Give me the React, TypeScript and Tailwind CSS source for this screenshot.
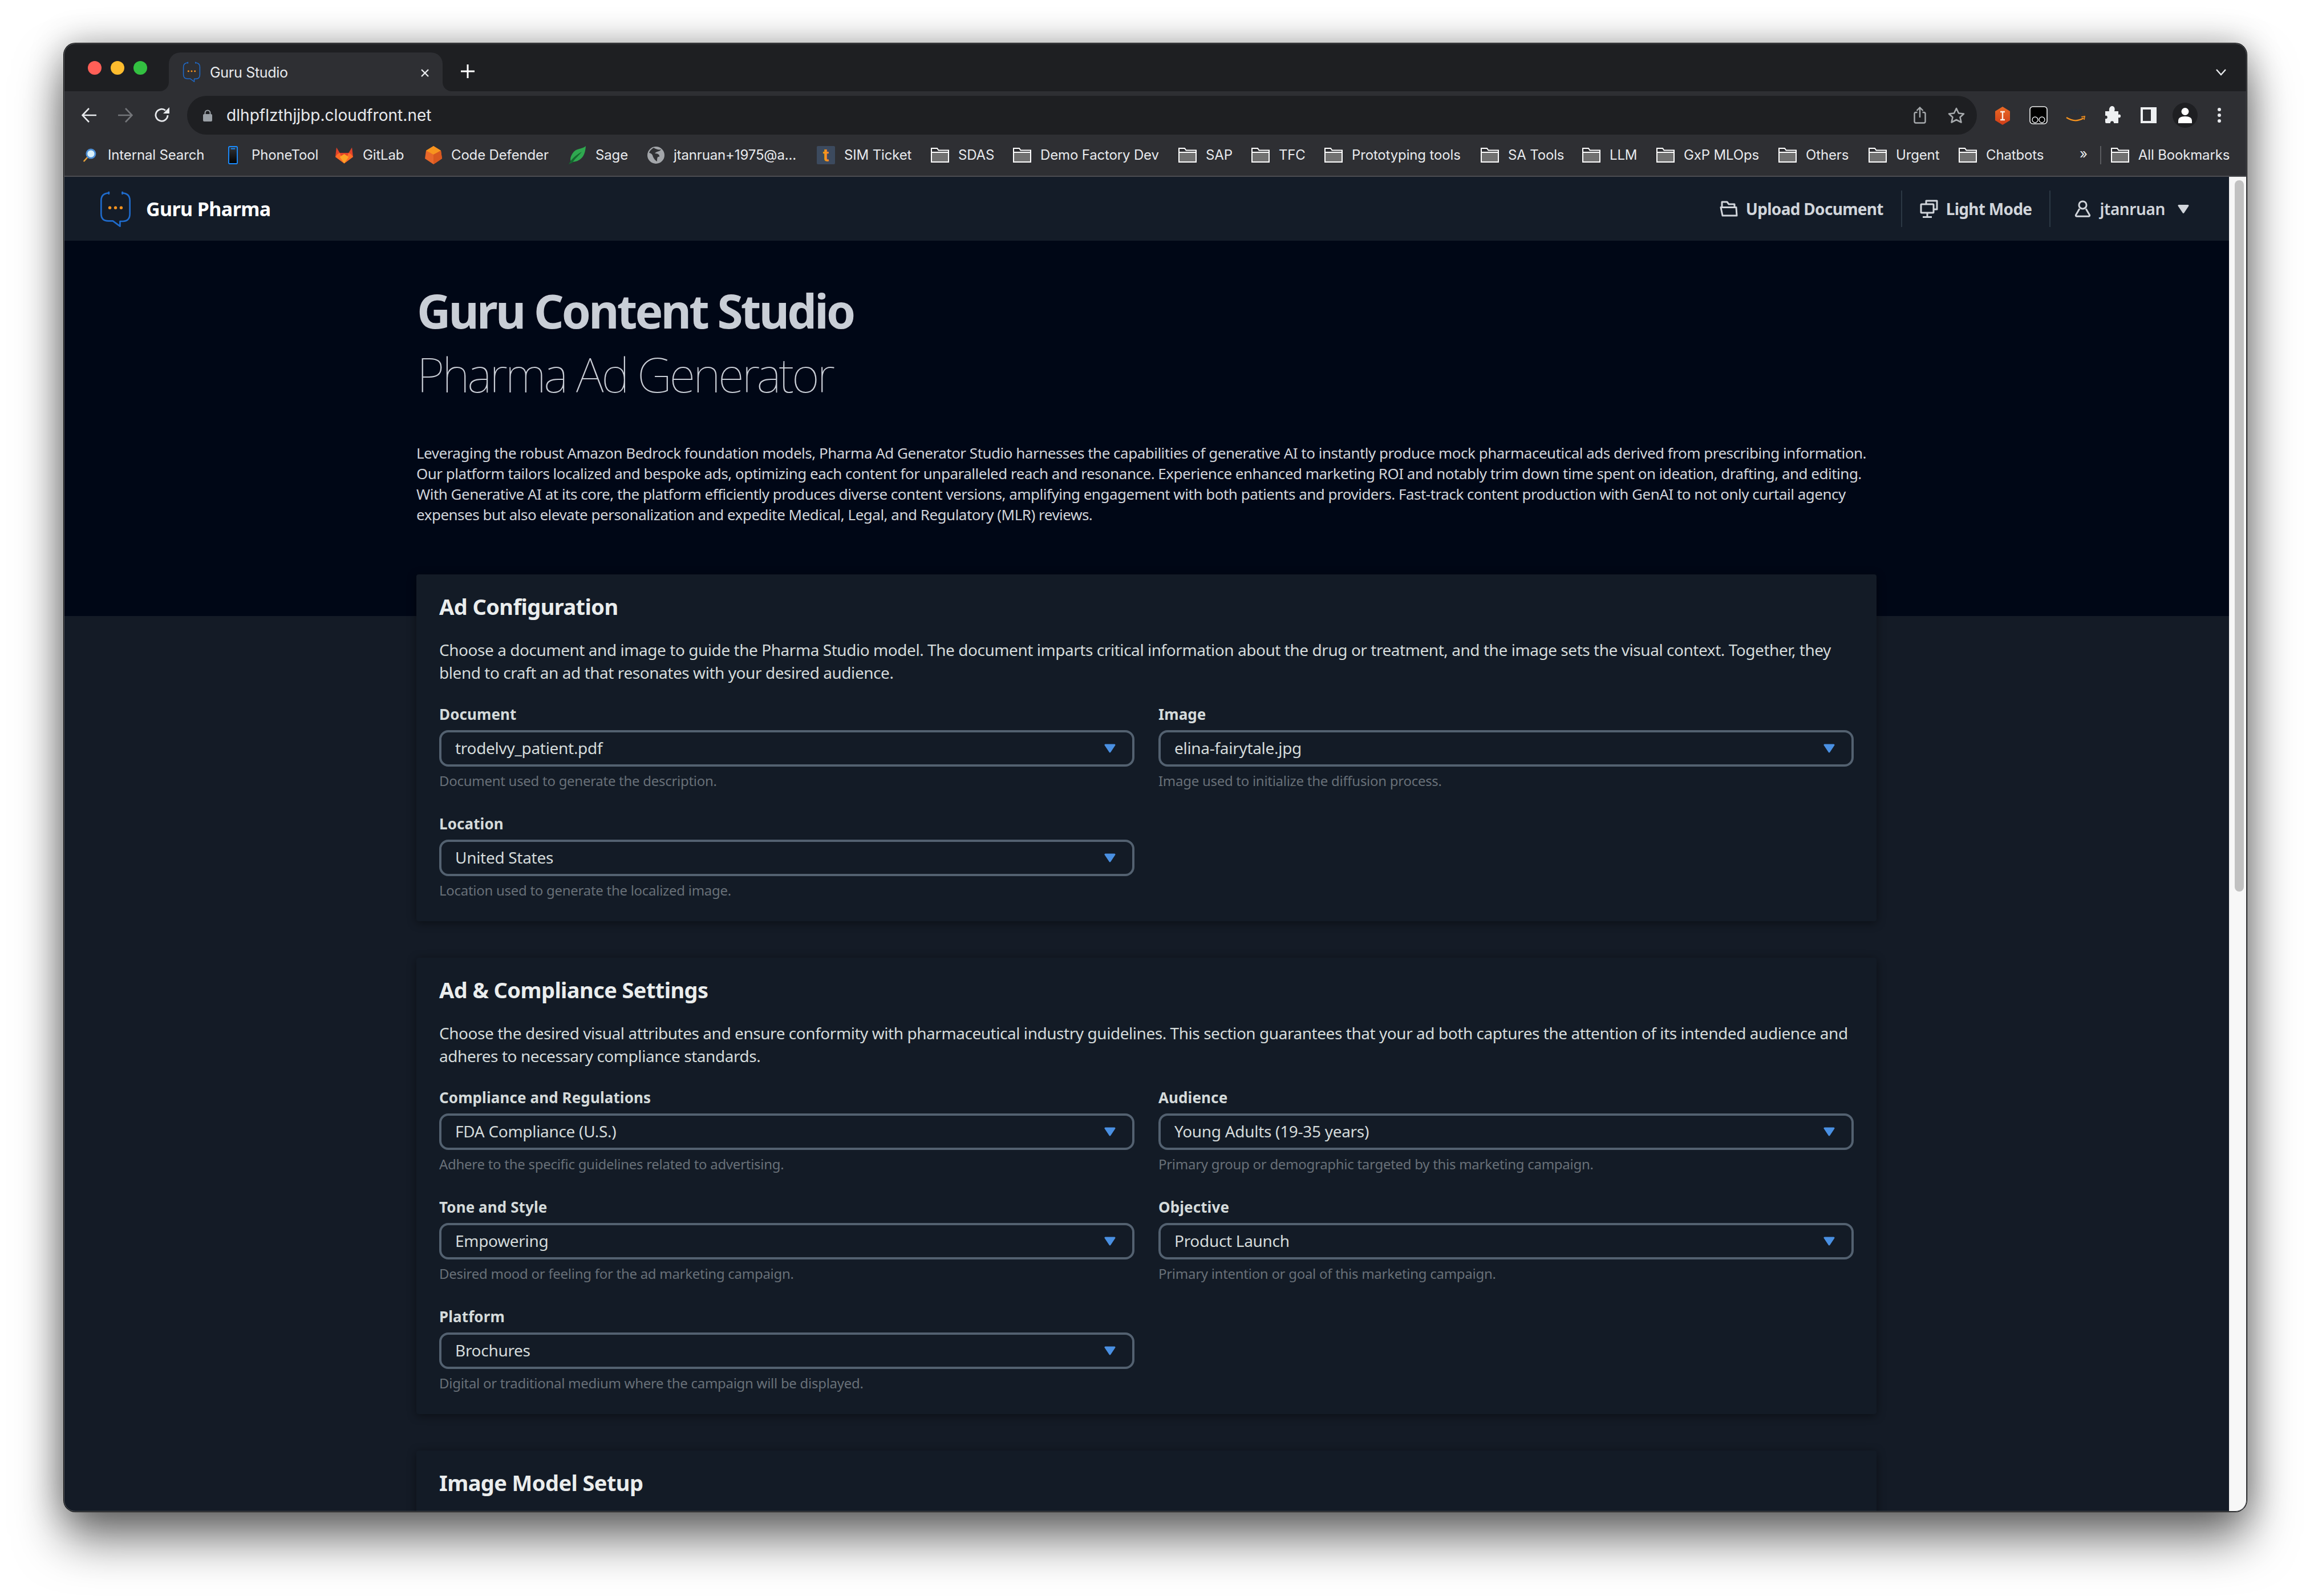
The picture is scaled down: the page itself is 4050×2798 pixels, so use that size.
import React from "react";

const Logo = ({ className }: { className: string }) => (
  <svg viewBox="0 0 160 190" className={className} fill="none">
    <path d="M44 10 Q4 12 4 50 L4 120 Q4 158 42 158 L66 158 L104 186 L104 160 L120 160 Q156 158 156 120 L156 50 Q156 12 116 10" stroke="#1f6bcb" strokeWidth="8" strokeLinejoin="round" />
    <rect x="40" y="2" width="9" height="16" rx="3" fill="#1f6bcb" />
    <rect x="112" y="2" width="9" height="16" rx="3" fill="#1f6bcb" />
    <circle cx="50" cy="88" r="8" fill="#f7931e" />
    <circle cx="80" cy="88" r="8" fill="#f7931e" />
    <circle cx="110" cy="88" r="8" fill="#f7931e" />
  </svg>
);

const Folder = () => (
  <svg viewBox="0 0 32 26" className="w-[32px] h-[26px] shrink-0" fill="none">
    <rect x="2" y="9" width="28" height="15" fill="#717171" />
    <path d="M1 1 H11 L13.5 4.5 H31 V25 H1 Z" stroke="#fff" strokeWidth="2" />
    <path d="M1 8 H31" stroke="#fff" strokeWidth="2" />
  </svg>
);

const Magnifier = () => (
  <svg viewBox="0 0 30 30" className="w-[24px] h-[24px] shrink-0 mr-[4px]">
    <path d="M11 19 L3 28" stroke="#e8a23c" strokeWidth="3" strokeLinecap="round" />
    <circle cx="18" cy="12" r="9.5" fill="#d9f1fb" stroke="#4d8fd6" strokeWidth="3.5" />
  </svg>
);
const Phone = () => (
  <svg viewBox="0 0 18 34" className="w-[17px] h-[32px] shrink-0 mr-[8px]">
    <defs>
      <linearGradient id="ph" x1="0" y1="0" x2="0" y2="1">
        <stop offset="0" stopColor="#33363a" />
        <stop offset="1" stopColor="#000" />
      </linearGradient>
    </defs>
    <rect x="1" y="1" width="16" height="32" rx="2" fill="url(#ph)" stroke="#1a8cff" strokeWidth="2" />
    <rect x="5" y="4" width="8" height="2" fill="#1a8cff" />
  </svg>
);
const GitLab = () => (
  <svg viewBox="0 0 34 32" className="w-[33px] h-[32px] shrink-0">
    <path d="M17 31 L1 19 L3 2 L9 12 H25 L31 2 L33 19 Z" fill="#e24329" />
    <path d="M17 31 L9 12 H25 Z" fill="#e24329" />
    <path d="M17 31 L1 19 L5 14 L9 12 Z" fill="#fc6d26" />
    <path d="M17 31 L33 19 L29 14 L25 12 Z" fill="#fc6d26" />
    <path d="M17 31 L9 19 L17 14 L25 19 Z" fill="#fca326" />
  </svg>
);
const Gem = () => (
  <svg viewBox="0 0 30 32" className="w-[30px] h-[32px] shrink-0">
    <path d="M15 0 L28 8 L30 22 L15 32 L0 22 L2 8 Z" fill="#e8672a" />
    <path d="M15 0 L28 8 L15 15 L2 8 Z" fill="#f7941e" />
    <path d="M15 15 L28 8 L30 22 L15 32 Z" fill="#d9581f" />
  </svg>
);
const Leaf = () => (
  <svg viewBox="0 0 32 32" className="w-[32px] h-[32px] shrink-0">
    <path d="M31 0 C30 14 26 26 8 28 C2 28 3 18 10 10 C16 4 26 5 31 0 Z" fill="#2fa84f" />
    <path d="M1 32 C6 22 14 16 24 10 C18 18 10 24 8 29 Z" fill="#15692f" />
  </svg>
);
const Globe = () => (
  <svg viewBox="0 0 30 30" className="w-[30px] h-[30px] shrink-0">
    <circle cx="15" cy="15" r="15" fill="#a3a6aa" />
    <path d="M11 2 C16 5 20 6 24 5 C22 9 16 8 13 12 C17 12 22 13 21 18 C18 17 17 19 17 26 C13 24 10 19 9 15 C7 12 5 11 3 11 C5 6 8 4 11 2 Z" fill="#303134" />
  </svg>
);

type BM = { label: string; w: string; ml: string; icon?: React.ReactNode };
const bookmarks: BM[] = [
  { label: "Internal Search", w: "w-[169px]", ml: "ml-[33px]", icon: <Magnifier /> },
  { label: "PhoneTool", w: "w-[113px]", ml: "ml-[42px]", icon: <Phone /> },
  { label: "GitLab", w: "w-[74px]", ml: "ml-[33px]", icon: <GitLab /> },
  { label: "Code Defender", w: "w-[171px]", ml: "ml-[35px]", icon: <Gem /> },
  { label: "Sage", w: "w-[56px]", ml: "ml-[34px]", icon: <Leaf /> },
  { label: "jtanruan+1975@a...", w: "w-[209px]", ml: "ml-[35px]", icon: <Globe /> },
  { label: "SIM Ticket", w: "w-[117px]", ml: "ml-[42px]", icon: <span className="w-[32px] h-[32px] shrink-0 bg-[#3c4a5e] rounded-[2px] flex items-center justify-center text-[#f7931e] font-bold text-[30px] leading-none">t</span> },
  { label: "SDAS", w: "w-[63px]", ml: "ml-[35px]" },
  { label: "Demo Factory Dev", w: "w-[209px]", ml: "ml-[33px]" },
  { label: "SAP", w: "w-[47px]", ml: "ml-[33px]" },
  { label: "TFC", w: "w-[46px]", ml: "ml-[33px]" },
  { label: "Prototyping tools", w: "w-[193px]", ml: "ml-[34px]" },
  { label: "SA Tools", w: "w-[96px]", ml: "ml-[33px]" },
  { label: "LLM", w: "w-[48px]", ml: "ml-[34px]" },
  { label: "GxP MLOps", w: "w-[132px]", ml: "ml-[34px]" },
  { label: "Others", w: "w-[76px]", ml: "ml-[34px]" },
  { label: "Urgent", w: "w-[77px]", ml: "ml-[34px]" },
  { label: "Chatbots", w: "w-[103px]", ml: "ml-[33px]" },
];

const sectionFields1 = [
  { label: "Document", value: "trodelvy_patient.pdf", help: "Document used to generate the description." },
  { label: "Image", value: "elina-fairytale.jpg", help: "Image used to initialize the diffusion process." },
  { label: "Location", value: "United States", help: "Location used to generate the localized image." },
];
const sectionFields2 = [
  { label: "Compliance and Regulations", value: "FDA Compliance (U.S.)", help: "Adhere to the specific guidelines related to advertising." },
  { label: "Audience", value: "Young Adults (19-35 years)", help: "Primary group or demographic targeted by this marketing campaign." },
  { label: "Tone and Style", value: "Empowering", help: "Desired mood or feeling for the ad marketing campaign." },
  { label: "Objective", value: "Product Launch", help: "Primary intention or goal of this marketing campaign." },
  { label: "Platform", value: "Brochures", help: "Digital or traditional medium where the campaign will be displayed." },
];

const Caret = ({ color, className }: { color: string; className: string }) => (
  <svg viewBox="0 0 20 16" className={className}>
    <path d="M2 2 H18 L10 14 Z" fill={color} stroke={color} strokeWidth="3" strokeLinejoin="round" />
  </svg>
);

const Field = ({ label, value, help }: { label: string; value: string; help: string }) => (
  <div>
    <div className="h-[40px] leading-[38px] text-[26px] font-bold tracking-[0.1px] text-[#d5dbdb] mb-[7px]">{label}</div>
    <div className="h-[64px] rounded-[16px] border-[4px] border-[#536170] flex items-center justify-between pl-[24px] pr-[29px]">
      <span className="text-[28px] tracking-[-0.3px] text-[#d5dbdb] mb-[3px]">{value}</span>
      <Caret color="#4a90e2" className="w-[20px] h-[16px]" />
    </div>
    <div className="mt-[9px] h-[32px] leading-[32px] text-[24px] tracking-[-0.28px] text-[#687078]">{help}</div>
  </div>
);

const Card = ({ title, lines, fields }: { title: string; lines: string[]; fields: { label: string; value: string; help: string }[] }) => (
  <section className="bg-[#131b26] rounded-[4px] px-[40px] pt-[34px] pb-[38px] shadow-[0_3px_16px_rgba(0,0,0,0.45)] mb-[64px]">
    <h2 className="h-[48px] leading-[45px] text-[38px] font-bold tracking-[-0.6px] text-[#eaeded]">{title}</h2>
    <p className="mt-[30px] mb-[34px] text-[28px] leading-[40px] tracking-[-0.45px] text-[#d5dbdb] whitespace-nowrap">
      {lines.map((l) => (
        <span key={l} className="block">{l}</span>
      ))}
    </p>
    <div className="grid grid-cols-2 gap-x-[42px] gap-y-[40px]">
      {fields.map((f) => (
        <Field key={f.label} {...f} />
      ))}
    </div>
  </section>
);

const NavSep = () => <div className="w-[2px] h-[64px] bg-[#2c3844]" />;

export default function App() {
  return (
    <div className="w-[4050px] h-[2798px] bg-white overflow-hidden pt-[76px] pl-[112px] font-['Noto_Sans',sans-serif]">
      <div className="relative w-[3827px] h-[2574px] rounded-[20px] bg-[#131b26] shadow-[0_0_0_1px_#000,0_48px_84px_rgba(0,0,0,0.55),0_0_60px_rgba(0,0,0,0.3)] flex flex-col">
        {/* tab strip */}
        <div className="h-[84px] bg-[#1e1f22] rounded-t-[20px] flex items-start pt-[16px] relative font-['Inter',sans-serif]">
          <div className="flex gap-[16px] pl-[42px] pt-[15px] w-[184px]">
            <span className="w-[24px] h-[24px] rounded-full bg-[#ff5f57]" />
            <span className="w-[24px] h-[24px] rounded-full bg-[#febc2e]" />
            <span className="w-[24px] h-[24px] rounded-full bg-[#33c041]" />
          </div>
          <div className="relative w-[480px] h-[68px] bg-[#2e2f33] rounded-t-[20px] flex items-center pl-[24px] pr-[24px] text-white">
            <Logo className="w-[32px] h-[36px] shrink-0" />
            <span className="ml-[16px] text-[25px] tracking-[-0.3px] text-[#e8eaed] mt-[3px]">Guru Studio</span>
            <svg viewBox="0 0 14 14" className="ml-auto w-[14px] h-[14px] mt-[3px]" stroke="#e8eaed" strokeWidth="2.4"><path d="M1 1 L13 13 M13 1 L1 13" /></svg>
            <span className="absolute -left-[16px] bottom-0 w-[16px] h-[16px] bg-[#2e2f33]"><span className="block w-full h-full bg-[#1e1f22] rounded-br-[16px]" /></span>
            <span className="absolute -right-[16px] bottom-0 w-[16px] h-[16px] bg-[#2e2f33]"><span className="block w-full h-full bg-[#1e1f22] rounded-bl-[16px]" /></span>
          </div>
          <svg viewBox="0 0 24 24" className="w-[24px] h-[24px] ml-[32px] mt-[21px]" stroke="#fff" strokeWidth="3"><path d="M12 0 V24 M0 12 H24" /></svg>
          <svg viewBox="0 0 18 12" className="absolute right-[36px] top-[45px] w-[18px] h-[12px]" fill="none" stroke="#e8eaed" strokeWidth="2.4"><path d="M1 1 L9 10 L17 1" /></svg>
        </div>
        {/* toolbar */}
        <div className="h-[76px] bg-[#2e2f33] flex items-start pt-[8px] font-['Inter',sans-serif]">
          <svg viewBox="0 0 26 26" className="w-[26px] h-[26px] ml-[31px] mt-[21px]" fill="none" stroke="#e8eaed" strokeWidth="2.6"><path d="M26 13 H2 M13 1 L1.5 13 L13 25" /></svg>
          <svg viewBox="0 0 26 26" className="w-[26px] h-[26px] ml-[38px] mt-[21px]" fill="none" stroke="#74767a" strokeWidth="2.6"><path d="M0 13 H24 M13 1 L24.5 13 L13 25" /></svg>
          <svg viewBox="0 0 28 28" className="w-[28px] h-[28px] ml-[37px] mt-[20px]" fill="none"><path d="M24 14 A10.5 10.5 0 1 1 20 5.5" stroke="#e8eaed" strokeWidth="2.8" /><path d="M27 0 V11 H16 Z" fill="#e8eaed" /></svg>
          <div className="ml-[30px] w-[3138px] h-[68px] rounded-full bg-[#1e1f22] flex items-center pl-[28px] pr-[21px]">
            <svg viewBox="0 0 16 21" className="w-[16px] h-[21px]"><path d="M3.5 9 V6 A4.5 4.5 0 0 1 12.5 6 V9" fill="none" stroke="#9aa0a6" strokeWidth="2" /><rect y="8" width="16" height="13" rx="2" fill="#9aa0a6" /></svg>
            <span className="ml-[25px] text-[28px] text-[#e8eaed] tracking-[0.05px]">dlhpflzthjjbp.cloudfront.net</span>
            <svg viewBox="0 0 22 30" className="ml-auto w-[22px] h-[30px]" fill="none" stroke="#a7aaad" strokeWidth="2.4"><path d="M6.5 10 H4 Q1.5 10 1.5 12.5 V26 Q1.5 28.5 4 28.5 H18 Q20.5 28.5 20.5 26 V12.5 Q20.5 10 18 10 H15.5 M11 19 V2 M5.5 7 L11 1.5 L16.5 7" /></svg>
            <svg viewBox="0 0 30 30" className="ml-[38px] w-[30px] h-[30px]" fill="none" stroke="#a7aaad" strokeWidth="2.6"><path d="M15 3 L19 11.5 L28 12.5 L21.5 18.5 L23.5 27.5 L15 23 L6.5 27.5 L8.5 18.5 L2 12.5 L11 11.5 Z" strokeLinejoin="round" /></svg>
          </div>
          <svg viewBox="0 0 28 32" className="ml-[31px] mt-[19px] w-[28px] h-[32px]">
            <defs>
              <linearGradient id="hx" x1="0" y1="0" x2="0" y2="1">
                <stop offset="0" stopColor="#ea6a25" />
                <stop offset="1" stopColor="#cf3d18" />
              </linearGradient>
            </defs>
            <path d="M14 0 L27 8 V24 L14 32 L1 24 V8 Z" fill="url(#hx)" />
            <path d="M10 9 H18 M14 9 V23 M10 23 H18" stroke="#fbeee4" strokeWidth="2.4" />
          </svg>
          <svg viewBox="0 0 32 32" className="ml-[33px] mt-[18px] w-[32px] h-[32px]"><rect x="1" y="1" width="30" height="30" rx="5" fill="#000" stroke="#f2f3f4" strokeWidth="1.6" /><circle cx="10" cy="24" r="5" fill="none" stroke="#e8eaed" strokeWidth="1.4" /><circle cx="22" cy="24" r="5" fill="none" stroke="#e8eaed" strokeWidth="1.4" /></svg>
          <svg viewBox="0 0 34 30" className="ml-[32px] mt-[18px] w-[34px] h-[30px]" fill="none">
            <text x="17" y="14" textAnchor="middle" fontSize="14" fill="#232f3e" fontFamily="Noto Sans, sans-serif">aea</text>
            <path d="M1 20 Q16 30 31 21" stroke="#f7931e" strokeWidth="2.2" />
            <path d="M27 19 L33 18 L32 24" stroke="#f7931e" strokeWidth="1.6" />
          </svg>
          <svg viewBox="0 0 30 32" className="ml-[33px] mt-[18px] w-[30px] h-[32px]"><path d="M2 9 H9 C8 2 12 0 14 0 C17 0 20 3 18 9 H25 V15 C30 12 31 22 25 20 V29 Q25 30 24 30 H17 C18 25 10 25 11 30 H4 Q2 30 2 28 V22 C7 24 7 15 2 17 Z" fill="#eef0f2" /></svg>
          <div className="ml-[34px] mt-[20px] w-[28px] h-[28px] border-[4px] border-[#eef0f2] bg-[#2e2f33] border-r-[10px]" />
          <div className="ml-[28px] mt-[12px] w-[44px] h-[44px] rounded-full bg-[#1e1f22] flex items-center justify-center">
            <svg viewBox="0 0 24 27" className="w-[24px] h-[27px]"><circle cx="12" cy="6.5" r="6.5" fill="#fff" /><path d="M0 27 V23 Q0 15 12 15 Q24 15 24 23 V27 Z" fill="#fff" /></svg>
          </div>
          <div className="ml-[35px] mt-[21px] flex flex-col gap-[4px]">
            <span className="w-[6px] h-[6px] rounded-full bg-[#e8eaed]" />
            <span className="w-[6px] h-[6px] rounded-full bg-[#e8eaed]" />
            <span className="w-[6px] h-[6px] rounded-full bg-[#e8eaed]" />
          </div>
        </div>
        {/* bookmarks */}
        <div className="h-[74px] bg-[#2e2f33] border-b-[2px] border-[#4c4d51] flex items-center text-[24px] tracking-[-0.15px] text-[#e8eaed] font-['Inter',sans-serif] whitespace-nowrap">
          {bookmarks.map((b) => (
            <div key={b.label} className={`flex items-center gap-[16px] ${b.ml}`}>
              {b.icon ?? <Folder />}
              <span className={b.w}>{b.label}</span>
            </div>
          ))}
          <span className="ml-[61px] text-[24px] mb-[4px]">»</span>
          <div className="ml-[22px] w-[2px] h-[32px] bg-[#5a5b5f]" />
          <div className="ml-[17px] flex items-center gap-[16px]">
            <Folder />
            <span>All Bookmarks</span>
          </div>
        </div>
        {/* content */}
        <div className="flex-1 flex overflow-hidden min-h-0 rounded-b-[20px]">
          <main className="w-[3796px] shrink-0 overflow-hidden bg-[#141b26]">
            <nav className="h-[112px] bg-[#141c28] flex items-center pl-[64px] pr-[70px]">
              <Logo className="w-[53px] h-[63px]" />
              <span className="ml-[27px] text-[34px] font-bold tracking-[-0.6px] text-white">Guru Pharma</span>
              <div className="ml-auto flex items-center text-[28px] font-bold tracking-[-0.7px] text-[#d1d5db]">
                <svg viewBox="0 0 32 28" className="w-[32px] h-[28px] mr-[14px]" fill="none" stroke="#d1d5db" strokeWidth="3" strokeLinejoin="round"><path d="M4 11 V2 H13 L16 6 H26 V11" /><path d="M2 11.5 H29 L30 26 H5 Z" /></svg>
                <span>Upload Document</span>
                <div className="mx-[31px]"><NavSep /></div>
                <svg viewBox="0 0 32 32" className="w-[32px] h-[32px] mr-[14px]" fill="none" stroke="#d1d5db" strokeWidth="3" strokeLinejoin="round"><path d="M11 8 V2 H30 V17 H24" /><rect x="2" y="8" width="22" height="15" rx="1" /><path d="M13 23 V30 M5 30.5 H21" /></svg>
                <span>Light Mode</span>
                <div className="mx-[31px]"><NavSep /></div>
                <svg viewBox="0 0 30 32" className="ml-[11px] w-[29px] h-[30px] mr-[15px]" fill="none" stroke="#d1d5db" strokeWidth="3.2" strokeLinejoin="round"><circle cx="15" cy="9" r="7" /><path d="M9 16 L2 28 Q2 30 4 30 H26 Q28 30 28 28 L21 16" /></svg>
                <span className="font-semibold tracking-[-0.4px]">jtanruan</span>
                <Caret color="#d1d5db" className="w-[20px] h-[17px] ml-[22px]" />
              </div>
            </nav>
            <header className="h-[658px] bg-[#000716]">
              <div className="w-[2560px] mx-auto pt-[66px] whitespace-nowrap">
                <h1 className="pl-[1px] h-[112px] leading-[112px] text-[82px] font-bold tracking-[-3.8px] text-[#c9ced6]">Guru Content Studio</h1>
                <div className="pl-[1px] h-[112px] leading-[112px] text-[84px] font-thin tracking-[-4px] text-[#c9ced6]">Pharma Ad Generator</div>
                <p className="mt-[64px] text-[26px] leading-[36px] tracking-[-0.5px] text-[#d1d5db]">
                  <span className="block">Leveraging the robust Amazon Bedrock foundation models, Pharma Ad Generator Studio harnesses the capabilities of generative AI to instantly produce mock pharmaceutical ads derived from prescribing information.</span>
                  <span className="block">Our platform tailors localized and bespoke ads, optimizing each content for unparalleled reach and resonance. Experience enhanced marketing ROI and notably trim down time spent on ideation, drafting, and editing.</span>
                  <span className="block">With Generative AI at its core, the platform efficiently produces diverse content versions, amplifying engagement with both patients and providers. Fast-track content production with GenAI to not only curtail agency</span>
                  <span className="block">expenses but also elevate personalization and expedite Medical, Legal, and Regulatory (MLR) reviews.</span>
                </p>
              </div>
            </header>
            <div className="w-[2560px] mx-auto -mt-[73px] relative">
              <Card
                title="Ad Configuration"
                lines={[
                  "Choose a document and image to guide the Pharma Studio model. The document imparts critical information about the drug or treatment, and the image sets the visual context. Together, they",
                  "blend to craft an ad that resonates with your desired audience.",
                ]}
                fields={sectionFields1}
              />
              <Card
                title="Ad & Compliance Settings"
                lines={[
                  "Choose the desired visual attributes and ensure conformity with pharmaceutical industry guidelines. This section guarantees that your ad both captures the attention of its intended audience and",
                  "adheres to necessary compliance standards.",
                ]}
                fields={sectionFields2}
              />
              <section className="bg-[#131b26] rounded-[4px] px-[40px] pt-[34px] h-[400px] shadow-[0_3px_16px_rgba(0,0,0,0.45)]">
                <h2 className="h-[48px] leading-[45px] text-[38px] font-bold tracking-[-0.6px] text-[#eaeded]">Image Model Setup</h2>
              </section>
            </div>
          </main>
          <div className="flex-1 bg-[#f7f7f7] pt-[6px] pl-[8px] border-l-[2px] border-[#f0f0f0] rounded-br-[20px]">
            <div className="w-[16px] h-[1247px] rounded-full bg-[#c1c1c1]" />
          </div>
        </div>
        <div className="absolute inset-0 rounded-[20px] border-[1px] border-[#5a5c60] pointer-events-none" />
      </div>
    </div>
  );
}
